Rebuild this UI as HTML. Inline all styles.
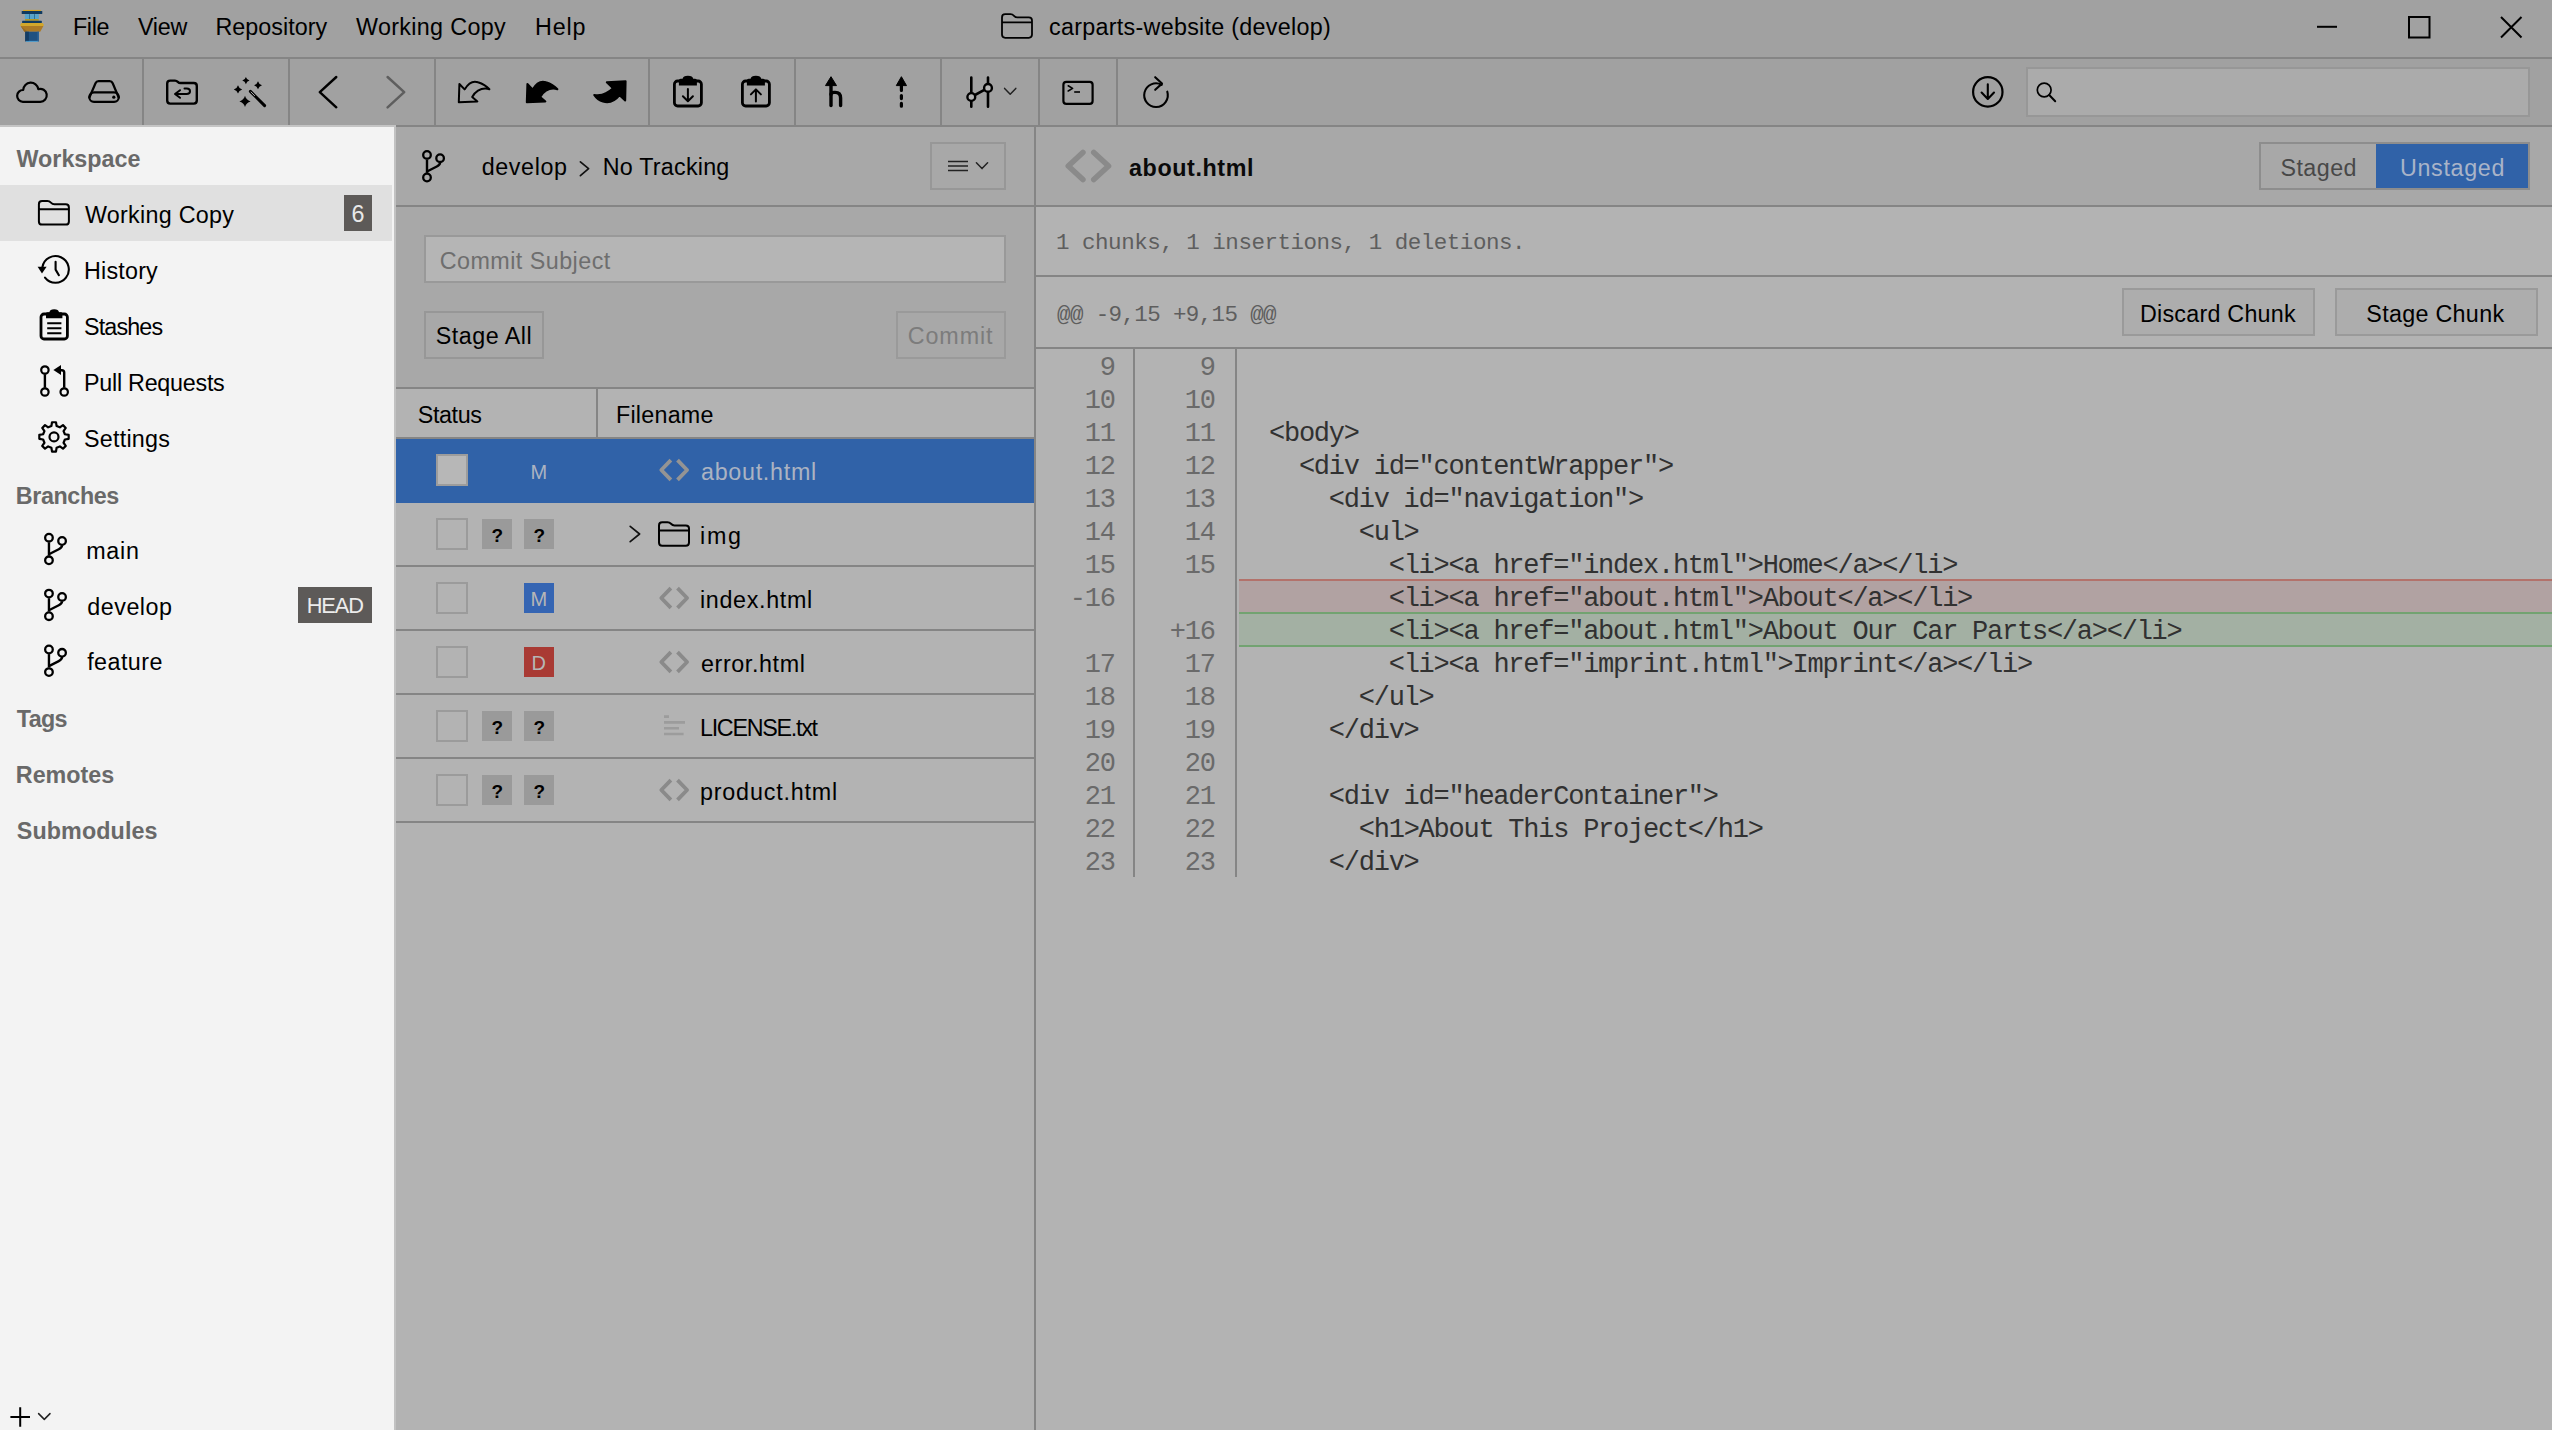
<!DOCTYPE html>
<html lang="en"><head><meta charset="utf-8"><title>carparts-website (develop)</title>
<style>
html,body{margin:0;padding:0}
body{width:2552px;height:1430px;position:relative;overflow:hidden;background:#b3b3b3;font-family:"Liberation Sans",sans-serif}
.b{position:absolute;box-sizing:border-box}
.t{position:absolute;white-space:pre;margin:0}
.s{font-family:"Liberation Sans",sans-serif}
.m{font-family:"Liberation Mono",monospace}
.i{position:absolute;overflow:visible}
</style></head><body>
<div class="b" style="left:0px;top:0px;width:2552px;height:127px;background:#a1a1a1;"></div>
<div class="b" style="left:0px;top:57px;width:2552px;height:2px;background:#858585;"></div>
<div class="b" style="left:0px;top:125px;width:2552px;height:2px;background:#858585;"></div>
<div class="b" style="left:0px;top:125px;width:396px;height:2px;background:#c4c4c4;"></div>
<div class="b" style="left:142px;top:59px;width:2px;height:66px;background:#858585;"></div>
<div class="b" style="left:288px;top:59px;width:2px;height:66px;background:#858585;"></div>
<div class="b" style="left:434px;top:59px;width:2px;height:66px;background:#858585;"></div>
<div class="b" style="left:648px;top:59px;width:2px;height:66px;background:#858585;"></div>
<div class="b" style="left:794px;top:59px;width:2px;height:66px;background:#858585;"></div>
<div class="b" style="left:940px;top:59px;width:2px;height:66px;background:#858585;"></div>
<div class="b" style="left:1038px;top:59px;width:2px;height:66px;background:#858585;"></div>
<div class="b" style="left:1116px;top:59px;width:2px;height:66px;background:#858585;"></div>
<div class="b" style="left:2026px;top:67px;width:504px;height:50px;background:#ababab;border:2px solid #979797;"></div>
<div class="b" style="left:0px;top:127px;width:394px;height:1303px;background:#f3f3f3;"></div>
<div class="b" style="left:394px;top:127px;width:2px;height:1303px;background:#c2c2c2;"></div>
<div class="b" style="left:0px;top:185px;width:392px;height:56px;background:#e0e0e0;"></div>
<div class="b" style="left:344px;top:195px;width:28px;height:36px;background:#5d5a58;"></div>
<div class="b" style="left:298px;top:587px;width:74px;height:36px;background:#5d5a58;"></div>
<div class="b" style="left:396px;top:127px;width:638px;height:79px;background:#a8a8a8;"></div>
<div class="b" style="left:396px;top:205px;width:638px;height:2px;background:#858585;"></div>
<div class="b" style="left:396px;top:207px;width:638px;height:181px;background:#a8a8a8;"></div>
<div class="b" style="left:930px;top:142px;width:76px;height:48px;border:2px solid #979797;"></div>
<div class="b" style="left:424px;top:235px;width:582px;height:48px;background:#b5b5b5;border:2px solid #999;"></div>
<div class="b" style="left:424px;top:311px;width:120px;height:48px;border:2px solid #979797;"></div>
<div class="b" style="left:896px;top:311px;width:110px;height:48px;border:2px solid #9a9a9a;"></div>
<div class="b" style="left:396px;top:387px;width:638px;height:2px;background:#858585;"></div>
<div class="b" style="left:396px;top:389px;width:638px;height:48px;background:#b3b3b3;"></div>
<div class="b" style="left:596px;top:389px;width:2px;height:48px;background:#858585;"></div>
<div class="b" style="left:396px;top:437px;width:638px;height:2px;background:#858585;"></div>
<div class="b" style="left:396px;top:439px;width:638px;height:64px;background:#3062a8;"></div>
<div class="b" style="left:396px;top:565px;width:638px;height:2px;background:#858585;"></div>
<div class="b" style="left:396px;top:629px;width:638px;height:2px;background:#858585;"></div>
<div class="b" style="left:396px;top:693px;width:638px;height:2px;background:#858585;"></div>
<div class="b" style="left:396px;top:757px;width:638px;height:2px;background:#858585;"></div>
<div class="b" style="left:396px;top:821px;width:638px;height:2px;background:#858585;"></div>
<div class="b" style="left:396px;top:823px;width:638px;height:607px;background:#b3b3b3;"></div>
<div class="b" style="left:436px;top:454px;width:32px;height:32px;background:#b7b7b7;border:2px solid #9c9c9c;"></div>
<div class="b" style="left:436px;top:518px;width:32px;height:32px;border:2px solid #9b9b9b;"></div>
<div class="b" style="left:436px;top:582px;width:32px;height:32px;border:2px solid #9b9b9b;"></div>
<div class="b" style="left:436px;top:646px;width:32px;height:32px;border:2px solid #9b9b9b;"></div>
<div class="b" style="left:436px;top:710px;width:32px;height:32px;border:2px solid #9b9b9b;"></div>
<div class="b" style="left:436px;top:774px;width:32px;height:32px;border:2px solid #9b9b9b;"></div>
<div class="b" style="left:482px;top:519px;width:30px;height:30px;background:#9a9a9a;"></div>
<div class="b" style="left:524px;top:519px;width:30px;height:30px;background:#9a9a9a;"></div>
<div class="b" style="left:524px;top:583px;width:30px;height:30px;background:#3565b3;"></div>
<div class="b" style="left:524px;top:647px;width:30px;height:30px;background:#a93a34;"></div>
<div class="b" style="left:482px;top:711px;width:30px;height:30px;background:#9a9a9a;"></div>
<div class="b" style="left:524px;top:711px;width:30px;height:30px;background:#9a9a9a;"></div>
<div class="b" style="left:482px;top:775px;width:30px;height:30px;background:#9a9a9a;"></div>
<div class="b" style="left:524px;top:775px;width:30px;height:30px;background:#9a9a9a;"></div>
<div class="b" style="left:1034px;top:127px;width:2px;height:1303px;background:#858585;"></div>
<div class="b" style="left:1036px;top:127px;width:1516px;height:79px;background:#a8a8a8;"></div>
<div class="b" style="left:1036px;top:205px;width:1516px;height:2px;background:#858585;"></div>
<div class="b" style="left:1036px;top:207px;width:1516px;height:68px;background:#b3b3b3;"></div>
<div class="b" style="left:1036px;top:275px;width:1516px;height:2px;background:#858585;"></div>
<div class="b" style="left:1036px;top:277px;width:1516px;height:70px;background:#b3b3b3;"></div>
<div class="b" style="left:1036px;top:347px;width:1516px;height:2px;background:#858585;"></div>
<div class="b" style="left:1036px;top:349px;width:1516px;height:1081px;background:#b3b3b3;"></div>
<div class="b" style="left:2259px;top:142px;width:271px;height:48px;border:2px solid #8d8d8d;"></div>
<div class="b" style="left:2376px;top:144px;width:152px;height:44px;background:#3062a8;"></div>
<div class="b" style="left:2122px;top:288px;width:193px;height:48px;background:#adadad;border:2px solid #9a9a9a;"></div>
<div class="b" style="left:2335px;top:288px;width:203px;height:48px;background:#adadad;border:2px solid #9a9a9a;"></div>
<div class="b" style="left:1133px;top:349px;width:2px;height:528px;background:#858585;"></div>
<div class="b" style="left:1235px;top:349px;width:2px;height:528px;background:#858585;"></div>
<div class="b" style="left:1239px;top:580px;width:1313px;height:33px;background:#b1a2a2;"></div>
<div class="b" style="left:1239px;top:579px;width:1313px;height:2px;background:#b3726b;"></div>
<div class="b" style="left:1239px;top:613px;width:1313px;height:33px;background:#a3b0a3;"></div>
<div class="b" style="left:1239px;top:612px;width:1313px;height:2px;background:#72a371;"></div>
<div class="b" style="left:1239px;top:645px;width:1313px;height:2px;background:#72a371;"></div>
<span class="t s" style="left:73px;top:7px;font-size:23.3px;line-height:40px;color:#000;letter-spacing:-0.361px;">File</span>
<span class="t s" style="left:138px;top:7px;font-size:23.3px;line-height:40px;color:#000;letter-spacing:-0.25px;">View</span>
<span class="t s" style="left:215.5px;top:7px;font-size:23.3px;line-height:40px;color:#000;letter-spacing:0.033px;">Repository</span>
<span class="t s" style="left:356px;top:7px;font-size:23.3px;line-height:40px;color:#000;letter-spacing:0.343px;">Working Copy</span>
<span class="t s" style="left:535px;top:7px;font-size:23.3px;line-height:40px;color:#000;letter-spacing:0.848px;">Help</span>
<span class="t s" style="left:1049px;top:7px;font-size:23.3px;line-height:40px;color:#000;letter-spacing:0.29px;">carparts-website (develop)</span>
<span class="t s" style="left:16.5px;top:139px;font-size:23.3px;line-height:40px;color:#696969;font-weight:700;letter-spacing:0.01px;">Workspace</span>
<span class="t s" style="left:85px;top:195px;font-size:23.3px;line-height:40px;color:#000;letter-spacing:0.27px;">Working Copy</span>
<span class="t s" style="left:351.5px;top:194px;font-size:23.3px;line-height:40px;color:#e8e8e8;">6</span>
<span class="t s" style="left:84px;top:251px;font-size:23.3px;line-height:40px;color:#000;letter-spacing:0.211px;">History</span>
<span class="t s" style="left:84px;top:307px;font-size:23.3px;line-height:40px;color:#000;letter-spacing:-0.855px;">Stashes</span>
<span class="t s" style="left:84px;top:363px;font-size:23.3px;line-height:40px;color:#000;letter-spacing:-0.249px;">Pull Requests</span>
<span class="t s" style="left:84px;top:419px;font-size:23.3px;line-height:40px;color:#000;letter-spacing:0.239px;">Settings</span>
<span class="t s" style="left:15.8px;top:476px;font-size:23.3px;line-height:40px;color:#696969;font-weight:700;letter-spacing:-0.389px;">Branches</span>
<span class="t s" style="left:86.2px;top:531px;font-size:23.3px;line-height:40px;color:#000;letter-spacing:0.72px;">main</span>
<span class="t s" style="left:87.2px;top:587px;font-size:23.3px;line-height:40px;color:#000;letter-spacing:0.542px;">develop</span>
<span class="t s" style="left:306.7px;top:586px;font-size:21.8px;line-height:40px;color:#ececec;letter-spacing:-1.106px;">HEAD</span>
<span class="t s" style="left:87.2px;top:642px;font-size:23.3px;line-height:40px;color:#000;letter-spacing:0.438px;">feature</span>
<span class="t s" style="left:16.8px;top:699px;font-size:23.3px;line-height:40px;color:#696969;font-weight:700;letter-spacing:-0.63px;">Tags</span>
<span class="t s" style="left:15.8px;top:755px;font-size:23.3px;line-height:40px;color:#696969;font-weight:700;letter-spacing:0.01px;">Remotes</span>
<span class="t s" style="left:16.8px;top:811px;font-size:23.3px;line-height:40px;color:#696969;font-weight:700;letter-spacing:0.107px;">Submodules</span>
<span class="t s" style="left:481.75px;top:147px;font-size:23.3px;line-height:40px;color:#000;letter-spacing:0.6px;">develop</span>
<span class="t s" style="left:602.75px;top:147px;font-size:23.3px;line-height:40px;color:#000;letter-spacing:0.224px;">No Tracking</span>
<span class="t s" style="left:439.75px;top:241px;font-size:23.3px;line-height:40px;color:#6e6e6e;letter-spacing:0.466px;">Commit Subject</span>
<span class="t s" style="left:435.75px;top:316px;font-size:23.3px;line-height:40px;color:#000;letter-spacing:0.491px;">Stage All</span>
<span class="t s" style="left:907.75px;top:316px;font-size:23.3px;line-height:40px;color:#7c7c7c;letter-spacing:0.896px;">Commit</span>
<span class="t s" style="left:417.75px;top:395px;font-size:23.3px;line-height:40px;color:#000;letter-spacing:-0.379px;">Status</span>
<span class="t s" style="left:616px;top:395px;font-size:23.3px;line-height:40px;color:#000;letter-spacing:0.234px;">Filename</span>
<span class="t s" style="left:701px;top:452px;font-size:23.3px;line-height:40px;color:#abb3c2;letter-spacing:0.71px;">about.html</span>
<span class="t s" style="left:530.5px;top:452px;font-size:20px;line-height:40px;color:#abb3c2;">M</span>
<span class="t s" style="left:700px;top:516px;font-size:23.3px;line-height:40px;color:#000;letter-spacing:1.709px;">img</span>
<span class="t s" style="left:700px;top:580px;font-size:23.3px;line-height:40px;color:#000;letter-spacing:0.666px;">index.html</span>
<span class="t s" style="left:701px;top:644px;font-size:23.3px;line-height:40px;color:#000;letter-spacing:0.61px;">error.html</span>
<span class="t s" style="left:700px;top:708px;font-size:23.3px;line-height:40px;color:#000;letter-spacing:-1.279px;">LICENSE.txt</span>
<span class="t s" style="left:700px;top:772px;font-size:23.3px;line-height:40px;color:#000;letter-spacing:0.817px;">product.html</span>
<span class="t s" style="left:491.5px;top:516px;font-size:19px;line-height:40px;color:#000;font-weight:700;">?</span>
<span class="t s" style="left:533.5px;top:516px;font-size:19px;line-height:40px;color:#000;font-weight:700;">?</span>
<span class="t s" style="left:530.5px;top:579px;font-size:20px;line-height:40px;color:#b6b6b6;">M</span>
<span class="t s" style="left:531.5px;top:643px;font-size:20px;line-height:40px;color:#b6b6b6;">D</span>
<span class="t s" style="left:491.5px;top:708px;font-size:19px;line-height:40px;color:#000;font-weight:700;">?</span>
<span class="t s" style="left:533.5px;top:708px;font-size:19px;line-height:40px;color:#000;font-weight:700;">?</span>
<span class="t s" style="left:491.5px;top:772px;font-size:19px;line-height:40px;color:#000;font-weight:700;">?</span>
<span class="t s" style="left:533.5px;top:772px;font-size:19px;line-height:40px;color:#000;font-weight:700;">?</span>
<span class="t s" style="left:1129px;top:148px;font-size:23.3px;line-height:40px;color:#0a0a0a;font-weight:700;letter-spacing:0.602px;">about.html</span>
<span class="t s" style="left:2280.4px;top:148px;font-size:23.3px;line-height:40px;color:#484848;letter-spacing:0.464px;">Staged</span>
<span class="t s" style="left:2400px;top:148px;font-size:23.3px;line-height:40px;color:#a9b4c8;letter-spacing:0.661px;">Unstaged</span>
<span class="t s" style="left:2140px;top:294px;font-size:23.3px;line-height:40px;color:#000;letter-spacing:0.239px;">Discard Chunk</span>
<span class="t s" style="left:2366.3px;top:294px;font-size:23.3px;line-height:40px;color:#000;letter-spacing:0.305px;">Stage Chunk</span>
<span class="t m" style="left:1056px;top:223px;font-size:22.5px;line-height:40px;color:#5e5e5e;letter-spacing:-0.474px;">1 chunks, 1 insertions, 1 deletions.</span>
<span class="t m" style="left:1057px;top:295px;font-size:22.5px;line-height:40px;color:#5e5e5e;letter-spacing:-0.627px;">@@ -9,15 +9,15 @@</span>
<span class="t m" style="left:1099.7px;top:348px;font-size:27.0px;line-height:40px;color:#6a6a6a;letter-spacing:-1.243px;">9</span>
<span class="t m" style="left:1199.7px;top:348px;font-size:27.0px;line-height:40px;color:#6a6a6a;letter-spacing:-1.243px;">9</span>
<span class="t m" style="left:1084.74px;top:381px;font-size:27.0px;line-height:40px;color:#6a6a6a;letter-spacing:-1.243px;">10</span>
<span class="t m" style="left:1184.74px;top:381px;font-size:27.0px;line-height:40px;color:#6a6a6a;letter-spacing:-1.243px;">10</span>
<span class="t m" style="left:1084.74px;top:414px;font-size:27.0px;line-height:40px;color:#6a6a6a;letter-spacing:-1.243px;">11</span>
<span class="t m" style="left:1184.74px;top:414px;font-size:27.0px;line-height:40px;color:#6a6a6a;letter-spacing:-1.243px;">11</span>
<span class="t m" style="left:1269.0px;top:414px;font-size:27.0px;line-height:40px;color:#313131;letter-spacing:-1.251px;">&lt;body&gt;</span>
<span class="t m" style="left:1084.74px;top:447px;font-size:27.0px;line-height:40px;color:#6a6a6a;letter-spacing:-1.243px;">12</span>
<span class="t m" style="left:1184.74px;top:447px;font-size:27.0px;line-height:40px;color:#6a6a6a;letter-spacing:-1.243px;">12</span>
<span class="t m" style="left:1298.92px;top:447px;font-size:27.0px;line-height:40px;color:#313131;letter-spacing:-1.244px;">&lt;div id="contentWrapper"&gt;</span>
<span class="t m" style="left:1084.74px;top:480px;font-size:27.0px;line-height:40px;color:#6a6a6a;letter-spacing:-1.243px;">13</span>
<span class="t m" style="left:1184.74px;top:480px;font-size:27.0px;line-height:40px;color:#6a6a6a;letter-spacing:-1.243px;">13</span>
<span class="t m" style="left:1328.84px;top:480px;font-size:27.0px;line-height:40px;color:#313131;letter-spacing:-1.245px;">&lt;div id="navigation"&gt;</span>
<span class="t m" style="left:1084.74px;top:513px;font-size:27.0px;line-height:40px;color:#6a6a6a;letter-spacing:-1.243px;">14</span>
<span class="t m" style="left:1184.74px;top:513px;font-size:27.0px;line-height:40px;color:#6a6a6a;letter-spacing:-1.243px;">14</span>
<span class="t m" style="left:1358.76px;top:513px;font-size:27.0px;line-height:40px;color:#313131;letter-spacing:-1.256px;">&lt;ul&gt;</span>
<span class="t m" style="left:1084.74px;top:546px;font-size:27.0px;line-height:40px;color:#6a6a6a;letter-spacing:-1.243px;">15</span>
<span class="t m" style="left:1184.74px;top:546px;font-size:27.0px;line-height:40px;color:#6a6a6a;letter-spacing:-1.243px;">15</span>
<span class="t m" style="left:1388.68px;top:546px;font-size:27.0px;line-height:40px;color:#313131;letter-spacing:-1.244px;">&lt;li&gt;&lt;a href="index.html"&gt;Home&lt;/a&gt;&lt;/li&gt;</span>
<span class="t m" style="left:1069.78px;top:579px;font-size:27.0px;line-height:40px;color:#6a6a6a;letter-spacing:-1.243px;">-16</span>
<span class="t m" style="left:1388.68px;top:579px;font-size:27.0px;line-height:40px;color:#313131;letter-spacing:-1.244px;">&lt;li&gt;&lt;a href="about.html"&gt;About&lt;/a&gt;&lt;/li&gt;</span>
<span class="t m" style="left:1169.78px;top:612px;font-size:27.0px;line-height:40px;color:#6a6a6a;letter-spacing:-1.243px;">+16</span>
<span class="t m" style="left:1388.68px;top:612px;font-size:27.0px;line-height:40px;color:#313131;letter-spacing:-1.243px;">&lt;li&gt;&lt;a href="about.html"&gt;About Our Car Parts&lt;/a&gt;&lt;/li&gt;</span>
<span class="t m" style="left:1084.74px;top:645px;font-size:27.0px;line-height:40px;color:#6a6a6a;letter-spacing:-1.243px;">17</span>
<span class="t m" style="left:1184.74px;top:645px;font-size:27.0px;line-height:40px;color:#6a6a6a;letter-spacing:-1.243px;">17</span>
<span class="t m" style="left:1388.68px;top:645px;font-size:27.0px;line-height:40px;color:#313131;letter-spacing:-1.244px;">&lt;li&gt;&lt;a href="imprint.html"&gt;Imprint&lt;/a&gt;&lt;/li&gt;</span>
<span class="t m" style="left:1084.74px;top:678px;font-size:27.0px;line-height:40px;color:#6a6a6a;letter-spacing:-1.243px;">18</span>
<span class="t m" style="left:1184.74px;top:678px;font-size:27.0px;line-height:40px;color:#6a6a6a;letter-spacing:-1.243px;">18</span>
<span class="t m" style="left:1358.76px;top:678px;font-size:27.0px;line-height:40px;color:#313131;letter-spacing:-1.253px;">&lt;/ul&gt;</span>
<span class="t m" style="left:1084.74px;top:711px;font-size:27.0px;line-height:40px;color:#6a6a6a;letter-spacing:-1.243px;">19</span>
<span class="t m" style="left:1184.74px;top:711px;font-size:27.0px;line-height:40px;color:#6a6a6a;letter-spacing:-1.243px;">19</span>
<span class="t m" style="left:1328.84px;top:711px;font-size:27.0px;line-height:40px;color:#313131;letter-spacing:-1.251px;">&lt;/div&gt;</span>
<span class="t m" style="left:1084.74px;top:744px;font-size:27.0px;line-height:40px;color:#6a6a6a;letter-spacing:-1.243px;">20</span>
<span class="t m" style="left:1184.74px;top:744px;font-size:27.0px;line-height:40px;color:#6a6a6a;letter-spacing:-1.243px;">20</span>
<span class="t m" style="left:1084.74px;top:777px;font-size:27.0px;line-height:40px;color:#6a6a6a;letter-spacing:-1.243px;">21</span>
<span class="t m" style="left:1184.74px;top:777px;font-size:27.0px;line-height:40px;color:#6a6a6a;letter-spacing:-1.243px;">21</span>
<span class="t m" style="left:1328.84px;top:777px;font-size:27.0px;line-height:40px;color:#313131;letter-spacing:-1.244px;">&lt;div id="headerContainer"&gt;</span>
<span class="t m" style="left:1084.74px;top:810px;font-size:27.0px;line-height:40px;color:#6a6a6a;letter-spacing:-1.243px;">22</span>
<span class="t m" style="left:1184.74px;top:810px;font-size:27.0px;line-height:40px;color:#6a6a6a;letter-spacing:-1.243px;">22</span>
<span class="t m" style="left:1358.76px;top:810px;font-size:27.0px;line-height:40px;color:#313131;letter-spacing:-1.244px;">&lt;h1&gt;About This Project&lt;/h1&gt;</span>
<span class="t m" style="left:1084.74px;top:843px;font-size:27.0px;line-height:40px;color:#6a6a6a;letter-spacing:-1.243px;">23</span>
<span class="t m" style="left:1184.74px;top:843px;font-size:27.0px;line-height:40px;color:#6a6a6a;letter-spacing:-1.243px;">23</span>
<span class="t m" style="left:1328.84px;top:843px;font-size:27.0px;line-height:40px;color:#313131;letter-spacing:-1.251px;">&lt;/div&gt;</span>
<svg class="i" style="left:0;top:0" width="2552" height="1430" viewBox="0 0 2552 1430"><g>
<rect x="23" y="9.9" width="17.9" height="1.3" fill="#d6a423"/>
<rect x="21.7" y="10.9" width="20.6" height="3.2" rx="0.6" fill="#103b60"/>
<rect x="24.9" y="14.1" width="14" height="5" fill="#57a5cc"/>
<rect x="29.3" y="14.1" width="0.7" height="5" fill="#1d5d85"/><rect x="34.3" y="14.1" width="0.7" height="5" fill="#1d5d85"/>
<rect x="25.1" y="19" width="13.6" height="1.8" fill="#b29926"/>
<rect x="22.1" y="20.8" width="19.7" height="2.3" rx="0.4" fill="#103b60"/>
<path d="M21.4 23 H42.6 L44 25.1 L43.4 26 H20.6 L20 25.1 Z" fill="#d2a72b"/>
<path d="M20.7 26 H43.4 L40.2 31.7 H24.4 Z" fill="#ad7a24"/>
<path d="M20.7 26 L24.4 31.7 H27.5 Z" fill="#9a6a1e"/>
<rect x="25.2" y="31.7" width="13.8" height="9.6" fill="#1f5181"/>
<rect x="25.2" y="31.7" width="3.7" height="9.6" fill="#143c63"/>
<rect x="37.4" y="31.7" width="1.6" height="9.6" fill="#2c6296"/>
<rect x="26" y="40.9" width="11.8" height="0.9" fill="#4aa0d4"/>
</g>
<path d="M1002 17.4 Q1002 14.2 1005.2 14.2 H1010.5 Q1012.5 14.2 1014 15.799999999999999 Q1015.5 17.4 1017.5 17.4 H1028.8 Q1032 17.4 1032 20.6 V34.599999999999994 Q1032 37.8 1028.8 37.8 H1005.2 Q1002 37.8 1002 34.599999999999994 Z M1002 22.4 H1032" fill="none" stroke="#000" stroke-width="1.8" stroke-linecap="round" stroke-linejoin="round" />
<path d="M38.9 204.2 Q38.9 201 42.1 201 H47.4 Q49.4 201 50.9 202.6 Q52.4 204.2 54.4 204.2 H65.7 Q68.9 204.2 68.9 207.4 V221.4 Q68.9 224.6 65.7 224.6 H42.1 Q38.9 224.6 38.9 221.4 Z M38.9 209.2 H68.9" fill="none" stroke="#000" stroke-width="2.0" stroke-linecap="round" stroke-linejoin="round" />
<path d="M659 525.4000000000001 Q659 522.2 662.2 522.2 H667.5 Q669.5 522.2 671 523.8000000000001 Q672.5 525.4000000000001 674.5 525.4000000000001 H685.8 Q689 525.4000000000001 689 528.6 V542.6 Q689 545.8000000000001 685.8 545.8000000000001 H662.2 Q659 545.8000000000001 659 542.6 Z M659 530.4000000000001 H689" fill="none" stroke="#000" stroke-width="2.0" stroke-linecap="round" stroke-linejoin="round" />
<path d="M2317 26.8 H2337" fill="none" stroke="#000" stroke-width="2" stroke-linecap="butt" stroke-linejoin="round" />
<path d="M2409 17 H2429.5 V37.5 H2409 Z" fill="none" stroke="#000" stroke-width="2" stroke-linecap="round" stroke-linejoin="miter" />
<path d="M2501 17 L2521.5 37.5 M2521.5 17 L2501 37.5" fill="none" stroke="#000" stroke-width="2" stroke-linecap="butt" stroke-linejoin="round" />
<path d="M22.9 101.8 H40.3 A6.5 6.5 0 1 0 38.3 89.1 A7.6 7.6 0 0 0 23.2 90 A5.9 5.9 0 1 0 22.9 101.8 Z" fill="none" stroke="#000" stroke-width="2.2" stroke-linecap="round" stroke-linejoin="round" />
<path d="M89.4 97.5 L95.5 83.2 Q96.4 81.1 98.6 81.1 H109.6 Q111.8 81.1 112.7 83.2 L118.7 97.5" fill="none" stroke="#000" stroke-width="2.2" stroke-linecap="round" stroke-linejoin="round" />
<rect x="89.3" y="92.4" width="29.5" height="9.5" rx="4.7" fill="none" stroke="#000" stroke-width="2.2"/>
<circle cx="113.8" cy="97.2" r="1.6" fill="#000" stroke="none" stroke-width="0"/>
<path d="M167.2 83.6 Q167.2 80.6 170.2 80.6 H175 Q176.6 80.6 177.8 81.8 Q179 83 180.6 83 H193.8 Q196.8 83 196.8 86 V100.6 Q196.8 103.6 193.8 103.6 H170.2 Q167.2 103.6 167.2 100.6 Z" fill="none" stroke="#000" stroke-width="2.4" stroke-linecap="round" stroke-linejoin="round" />
<path d="M180 90.2 L175 94 L180 97.8 M175.4 94 H186.6 Q190 94 190 91.2 Q190 88.6 186.8 88.6 H184.5" fill="none" stroke="#000" stroke-width="2.0" stroke-linecap="round" stroke-linejoin="round" />
<path d="M245.9 77.0 Q246.692 79.80799999999999 249.5 80.6 Q246.692 81.392 245.9 84.19999999999999 Q245.108 81.392 242.3 80.6 Q245.108 79.80799999999999 245.9 77.0 Z" fill="#000"/>
<path d="M258 81.2 Q258.88 84.32000000000001 262.0 85.2 Q258.88 86.08 258 89.2 Q257.12 86.08 254.0 85.2 Q257.12 84.32000000000001 258 81.2 Z" fill="#000"/>
<path d="M238 85.2 Q238.924 88.476 242.2 89.4 Q238.924 90.32400000000001 238 93.60000000000001 Q237.076 90.32400000000001 233.8 89.4 Q237.076 88.476 238 85.2 Z" fill="#000"/>
<path d="M245 95.80000000000001 Q246.232 100.168 250.6 101.4 Q246.232 102.632 245 107.0 Q243.768 102.632 239.4 101.4 Q243.768 100.168 245 95.80000000000001 Z" fill="#000"/>
<path d="M250.4 91.4 L264.6 105.6" fill="none" stroke="#000" stroke-width="3.0" stroke-linecap="round" stroke-linejoin="round" />
<path d="M251 92 L254.6 95.6" fill="none" stroke="#bbb" stroke-width="0.9" stroke-linecap="round" stroke-linejoin="round" />
<path d="M336.3 77 L319.8 92.2 L336.3 107.3" fill="none" stroke="#000" stroke-width="2.4" stroke-linecap="round" stroke-linejoin="round" />
<path d="M387.6 77 L404.2 92.2 L387.6 107.3" fill="none" stroke="#5e5e5e" stroke-width="2.5" stroke-linecap="round" stroke-linejoin="round" />
<path d="M458.8 102.2 L459.4 84 L464.6 89.4 Q470.5 79.6 478 82.2 Q485 84.4 489.4 89.2 Q483.5 87.4 478 90.6 Q474 93.2 472.2 97 L477.4 101.4 Z" fill="none" stroke="#000" stroke-width="2.0" stroke-linecap="round" stroke-linejoin="round" />
<path d="M526.8 102.2 L527.4 84 L532.6 89.4 Q538.5 79.6 546 82.2 Q553 84.4 557.4 89.2 Q551.5 87.4 546 90.6 Q542 93.2 540.2 97 L545.4 101.4 Z" fill="#000" stroke="#000" stroke-width="2.0" stroke-linecap="round" stroke-linejoin="round" />
<path d="M606.8 82.2 L625.6 81.2 L625.2 100.6 L619.6 95.2 Q612.5 104.2 603 101.6 Q597.5 100 594.2 95 Q601 96 606 93.2 Q610.5 90.6 613 88.2 Z" fill="#000" stroke="#000" stroke-width="2.0" stroke-linecap="round" stroke-linejoin="round" />
<rect x="674.4" y="81" width="27" height="25" rx="3.2" fill="none" stroke="#000" stroke-width="2.8"/>
<path d="M678.9 85.4 V80.4 Q678.9 78.8 680.6 78.8 H682.6 Q683 75.7 687.9 75.7 Q692.8 75.7 693.2 78.8 H695.2 Q696.9 78.8 696.9 80.4 V85.4 Z" fill="#000"/>
<path d="M687.9 89 V101 M682.9 96.2 L687.9 101.2 L692.9 96.2" fill="none" stroke="#000" stroke-width="2.0" stroke-linecap="round" stroke-linejoin="round" />
<rect x="742.4" y="81" width="27" height="25" rx="3.2" fill="none" stroke="#000" stroke-width="2.8"/>
<path d="M746.9 85.4 V80.4 Q746.9 78.8 748.6 78.8 H750.6 Q751 75.7 755.9 75.7 Q760.8 75.7 761.2 78.8 H763.2 Q764.9 78.8 764.9 80.4 V85.4 Z" fill="#000"/>
<path d="M755.9 101.6 V89.6 M750.9 94.4 L755.9 89.4 L760.9 94.4" fill="none" stroke="#000" stroke-width="2.0" stroke-linecap="round" stroke-linejoin="round" />
<path d="M831 76.7 L836.5 85.6 H825.5 Z" fill="#000" stroke="#000" stroke-width="1" stroke-linejoin="round"/>
<path d="M831 85 V105.6" fill="none" stroke="#000" stroke-width="3.4" stroke-linecap="round" stroke-linejoin="round" />
<path d="M831 94.6 Q831 92.4 834 92.4 H835.2 Q840.6 92.4 840.6 98 V105.6" fill="none" stroke="#000" stroke-width="3.4" stroke-linecap="round" stroke-linejoin="round" />
<path d="M901.4 76.7 L906.5 85.6 H896.3 Z" fill="#000" stroke="#000" stroke-width="1" stroke-linejoin="round"/>
<path d="M901.4 85 V90.4 M901.4 95.6 V98.6 M901.4 103.4 V106.2" fill="none" stroke="#000" stroke-width="3.2" stroke-linecap="round" stroke-linejoin="round" />
<path d="M971.3 77.6 V106.8 M988 77.6 V106.8" fill="none" stroke="#000" stroke-width="2.6" stroke-linecap="round" stroke-linejoin="round" />
<path d="M971.3 97 L988 87.9" fill="none" stroke="#000" stroke-width="2.6" stroke-linecap="round" stroke-linejoin="round" />
<circle cx="971.3" cy="97" r="3.9" fill="#b4b4b4" stroke="#000" stroke-width="2.4"/>
<circle cx="988" cy="87.9" r="3.9" fill="#b4b4b4" stroke="#000" stroke-width="2.4"/>
<path d="M1004.6 88.4 L1010.2 94.2 L1015.8 88.4" fill="none" stroke="#222" stroke-width="1.5" stroke-linecap="round" stroke-linejoin="round" />
<rect x="1063.4" y="81.9" width="29.2" height="21.9" rx="2.9" fill="none" stroke="#000" stroke-width="2.2"/>
<path d="M1068.2 85.8 L1072.6 88.4 L1068.2 91" fill="none" stroke="#000" stroke-width="1.6" stroke-linecap="round" stroke-linejoin="round" />
<path d="M1074.2 92 H1080" fill="none" stroke="#000" stroke-width="1.6" stroke-linecap="butt" stroke-linejoin="round" />
<path d="M1161.7 84.8 A11.8 11.8 0 1 0 1167.3 91.7" fill="none" stroke="#000" stroke-width="2.1" stroke-linecap="round" stroke-linejoin="round" />
<path d="M1155.2 77.2 L1162 83.6 L1155.2 89.8" fill="none" stroke="#000" stroke-width="2.1" stroke-linecap="round" stroke-linejoin="round" />
<circle cx="1987.8" cy="91.9" r="14.7" fill="none" stroke="#000" stroke-width="2.2"/>
<path d="M1987.8 84.2 V98.8 M1981.6 92.6 L1987.8 98.9 L1994 92.6" fill="none" stroke="#000" stroke-width="2.1" stroke-linecap="round" stroke-linejoin="round" />
<circle cx="2044.2" cy="90" r="6.9" fill="none" stroke="#000" stroke-width="1.7"/>
<path d="M2049.2 95 L2055.2 101.2" fill="none" stroke="#000" stroke-width="2.0" stroke-linecap="round" stroke-linejoin="round" />
<path d="M42.4 267.1 A13.3 13.3 0 1 1 45.0 277.6" fill="none" stroke="#000" stroke-width="2.1" stroke-linecap="round" stroke-linejoin="round" />
<path d="M37.6 266.8 H46.6 L42 273.6 Z" fill="#000"/>
<path d="M55.6 261.8 V269.6 L58.9 275.2" fill="none" stroke="#000" stroke-width="2.1" stroke-linecap="round" stroke-linejoin="round" />
<rect x="41" y="314" width="26.4" height="25" rx="3" fill="none" stroke="#000" stroke-width="2.8"/>
<path d="M46 318.2 V313.6 Q46 312.2 47.6 312.2 H49.4 Q49.8 309.2 54.2 309.2 Q58.6 309.2 59 312.2 H60.8 Q62.4 312.2 62.4 313.6 V318.2 Z" fill="#000"/>
<path d="M47.2 323.2 H61.4 M47.2 328.2 H61.4 M47.2 333.3 H61.4" fill="none" stroke="#000" stroke-width="2.0" stroke-linecap="butt" stroke-linejoin="round" />
<circle cx="44.9" cy="370" r="3.7" fill="none" stroke="#000" stroke-width="2.2"/>
<circle cx="44.9" cy="392" r="3.7" fill="none" stroke="#000" stroke-width="2.2"/>
<circle cx="64.2" cy="392" r="3.7" fill="none" stroke="#000" stroke-width="2.2"/>
<path d="M44.9 374.2 V387.8" fill="none" stroke="#000" stroke-width="2.4" stroke-linecap="butt" stroke-linejoin="round" />
<path d="M64.2 387.8 V372.6 Q64.2 370.2 61.8 370.2 H59.5" fill="none" stroke="#000" stroke-width="2.4" stroke-linecap="butt" stroke-linejoin="round" />
<path d="M53.4 370 L61 364.9 V375.1 Z" fill="#000"/>
<path d="M52.03 422.23 L55.97 422.23 L56.61 426.01 L59.85 427.35 L62.98 425.13 L65.77 427.92 L63.55 431.05 L64.89 434.29 L68.67 434.93 L68.67 438.87 L64.89 439.51 L63.55 442.75 L65.77 445.88 L62.98 448.67 L59.85 446.45 L56.61 447.79 L55.97 451.57 L52.03 451.57 L51.39 447.79 L48.15 446.45 L45.02 448.67 L42.23 445.88 L44.45 442.75 L43.11 439.51 L39.33 438.87 L39.33 434.93 L43.11 434.29 L44.45 431.05 L42.23 427.92 L45.02 425.13 L48.15 427.35 L51.39 426.01 Z" fill="none" stroke="#000" stroke-width="2.2" stroke-linecap="round" stroke-linejoin="round" />
<circle cx="54" cy="436.9" r="4.5" fill="none" stroke="#000" stroke-width="2.2"/>
<circle cx="48.96" cy="537.7" r="3.8" fill="none" stroke="#000" stroke-width="2.3"/>
<circle cx="48.96" cy="560.3000000000001" r="3.8" fill="none" stroke="#000" stroke-width="2.3"/>
<circle cx="62.06" cy="541.0" r="3.8" fill="none" stroke="#000" stroke-width="2.3"/>
<path d="M48.96 542.3000000000001 V555.7" fill="none" stroke="#000" stroke-width="2.4" stroke-linecap="butt" stroke-linejoin="round" />
<path d="M48.96 554.3000000000001 L58.760000000000005 549.3000000000001 Q62.06 547.7 62.06 545.3000000000001" fill="none" stroke="#000" stroke-width="2.4" stroke-linecap="butt" stroke-linejoin="round" />
<circle cx="48.96" cy="593.6" r="3.8" fill="none" stroke="#000" stroke-width="2.3"/>
<circle cx="48.96" cy="616.2" r="3.8" fill="none" stroke="#000" stroke-width="2.3"/>
<circle cx="62.06" cy="596.9" r="3.8" fill="none" stroke="#000" stroke-width="2.3"/>
<path d="M48.96 598.2 V611.6" fill="none" stroke="#000" stroke-width="2.4" stroke-linecap="butt" stroke-linejoin="round" />
<path d="M48.96 610.2 L58.760000000000005 605.2 Q62.06 603.6 62.06 601.2" fill="none" stroke="#000" stroke-width="2.4" stroke-linecap="butt" stroke-linejoin="round" />
<circle cx="48.96" cy="649.5" r="3.8" fill="none" stroke="#000" stroke-width="2.3"/>
<circle cx="48.96" cy="672.1" r="3.8" fill="none" stroke="#000" stroke-width="2.3"/>
<circle cx="62.06" cy="652.8" r="3.8" fill="none" stroke="#000" stroke-width="2.3"/>
<path d="M48.96 654.1 V667.5" fill="none" stroke="#000" stroke-width="2.4" stroke-linecap="butt" stroke-linejoin="round" />
<path d="M48.96 666.1 L58.760000000000005 661.1 Q62.06 659.5 62.06 657.1" fill="none" stroke="#000" stroke-width="2.4" stroke-linecap="butt" stroke-linejoin="round" />
<circle cx="427" cy="154.9" r="3.8" fill="none" stroke="#000" stroke-width="2.3"/>
<circle cx="427" cy="177.5" r="3.8" fill="none" stroke="#000" stroke-width="2.3"/>
<circle cx="440.1" cy="158.20000000000002" r="3.8" fill="none" stroke="#000" stroke-width="2.3"/>
<path d="M427 159.5 V172.9" fill="none" stroke="#000" stroke-width="2.4" stroke-linecap="butt" stroke-linejoin="round" />
<path d="M427 171.5 L436.8 166.5 Q440.1 164.9 440.1 162.5" fill="none" stroke="#000" stroke-width="2.4" stroke-linecap="butt" stroke-linejoin="round" />
<path d="M580.4 161.8 L588.6 168.6 L580.4 175.6" fill="none" stroke="#111" stroke-width="1.7" stroke-linecap="round" stroke-linejoin="round" />
<path d="M948 161.6 H968 M948 166 H968 M948 170.4 H968" fill="none" stroke="#222" stroke-width="1.5" stroke-linecap="butt" stroke-linejoin="round" />
<path d="M976.4 162.8 L982 168.6 L987.6 162.8" fill="none" stroke="#222" stroke-width="1.5" stroke-linecap="round" stroke-linejoin="round" />
<path d="M10.4 1417 H30 M20.2 1407.2 V1426.8" fill="none" stroke="#000" stroke-width="2.0" stroke-linecap="butt" stroke-linejoin="round" />
<path d="M38.6 1413.6 L44.3 1419.4 L50 1413.6" fill="none" stroke="#222" stroke-width="1.5" stroke-linecap="round" stroke-linejoin="round" />
<path d="M630.2 526.4 L639.6 534 L630.2 541.6" fill="none" stroke="#111" stroke-width="1.7" stroke-linecap="round" stroke-linejoin="round" />
<path d="M670.9000000000001 460.2 L661.3000000000001 470 L670.9000000000001 479.8 M677.5 460.2 L687.1 470 L677.5 479.8" fill="none" stroke="#949494" stroke-width="3.8" stroke-linecap="butt" stroke-linejoin="round" />
<path d="M670.9000000000001 588.2 L661.3000000000001 598 L670.9000000000001 607.8 M677.5 588.2 L687.1 598 L677.5 607.8" fill="none" stroke="#8a8a8a" stroke-width="3.8" stroke-linecap="butt" stroke-linejoin="round" />
<path d="M670.9000000000001 652.2 L661.3000000000001 662 L670.9000000000001 671.8 M677.5 652.2 L687.1 662 L677.5 671.8" fill="none" stroke="#8a8a8a" stroke-width="3.8" stroke-linecap="butt" stroke-linejoin="round" />
<path d="M670.9000000000001 780.2 L661.3000000000001 790 L670.9000000000001 799.8 M677.5 780.2 L687.1 790 L677.5 799.8" fill="none" stroke="#8a8a8a" stroke-width="3.8" stroke-linecap="butt" stroke-linejoin="round" />
<path d="M1082.9 152.5 L1068.3 166 L1082.9 179.5 M1093.8 152.5 L1108.5 166 L1093.8 179.5" fill="none" stroke="#8a8a8a" stroke-width="5.6" stroke-linecap="round" stroke-linejoin="round" />
<path d="M664 716.6 H669 M664 722.4 H685 M664 728.2 H679 M664 734 H683.6" fill="none" stroke="#9c9c9c" stroke-width="2.6" stroke-linecap="butt" stroke-linejoin="round" /></svg>
</body></html>
